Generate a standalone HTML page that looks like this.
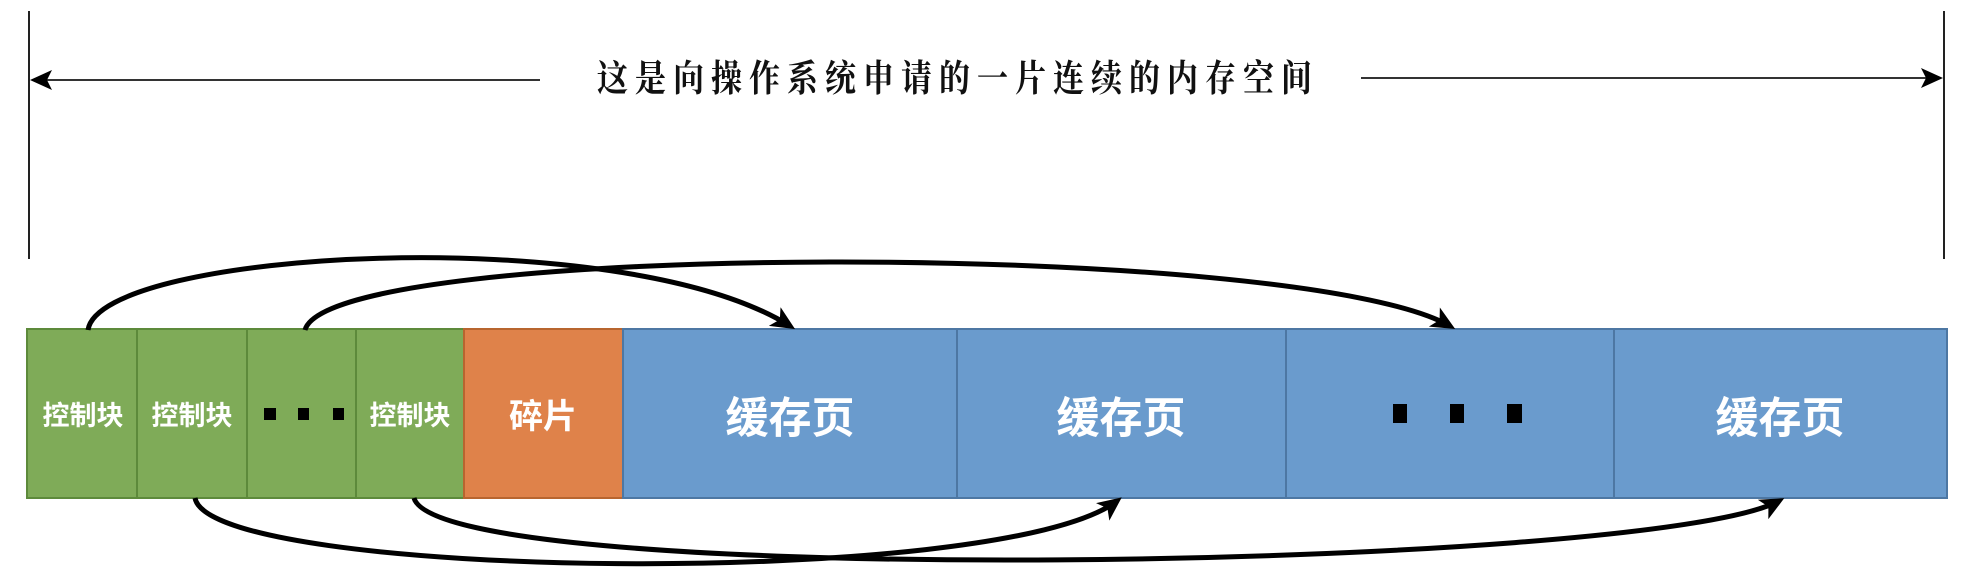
<!DOCTYPE html>
<html><head><meta charset="utf-8"><style>
html,body{margin:0;padding:0;background:#fff;}
svg{display:block}
.t{font-family:"Liberation Sans","Noto Sans CJK SC",sans-serif;fill:#fff;text-anchor:middle;}
</style></head><body>
<svg width="1974" height="584" viewBox="0 0 1974 584" xmlns="http://www.w3.org/2000/svg">
<defs>
<marker id="ah" markerWidth="24" markerHeight="22" refX="18" refY="11" orient="auto" markerUnits="userSpaceOnUse" viewBox="0 0 24 22">
<path d="M0,0 L24,11 L0,22 L6,11 Z" fill="#000"/>
</marker>
</defs>
<line x1="29" y1="11" x2="29" y2="259" stroke="#222" stroke-width="2"/>
<line x1="1944" y1="11" x2="1944" y2="259" stroke="#222" stroke-width="2"/>
<line x1="40" y1="80" x2="540" y2="80" stroke="#333" stroke-width="2"/>
<path d="M30,80 L52,70 L47,80 L52,90 Z" fill="#000"/>
<line x1="1361" y1="78" x2="1932" y2="78" stroke="#333" stroke-width="2"/>
<path d="M1943,78 L1921,68 L1926,78 L1921,88 Z" fill="#000"/>
<g transform="translate(958,91) scale(1,1.2)">
<text x="0" y="0" font-family="'Liberation Serif','Noto Serif CJK SC',serif" font-weight="bold" font-size="31" letter-spacing="7" text-anchor="middle" fill="#111">这是向操作系统申请的一片连续的内存空间</text>
</g>
<g stroke-width="2">
<rect x="27" y="329" width="110" height="169" fill="#7fab58" stroke="#5d8a3b"/>
<rect x="137" y="329" width="110" height="169" fill="#7fab58" stroke="#5d8a3b"/>
<rect x="247" y="329" width="109" height="169" fill="#7fab58" stroke="#5d8a3b"/>
<rect x="356" y="329" width="108" height="169" fill="#7fab58" stroke="#5d8a3b"/>
<rect x="464" y="329" width="159" height="169" fill="#df824a" stroke="#b8652f"/>
<rect x="623" y="329" width="334" height="169" fill="#6a9bcd" stroke="#4d77a3"/>
<rect x="957" y="329" width="329" height="169" fill="#6a9bcd" stroke="#4d77a3"/>
<rect x="1286" y="329" width="328" height="169" fill="#6a9bcd" stroke="#4d77a3"/>
<rect x="1614" y="329" width="333" height="169" fill="#6a9bcd" stroke="#4d77a3"/>
</g>
<g font-weight="bold">
<text class="t" x="83" y="425" font-size="27">控制块</text>
<text class="t" x="192" y="425" font-size="27">控制块</text>
<text class="t" x="410" y="425" font-size="27">控制块</text>
<text class="t" x="543" y="428" font-size="34">碎片</text>
<text class="t" x="790" y="433" font-size="43">缓存页</text>
<text class="t" x="1121" y="433" font-size="43">缓存页</text>
<text class="t" x="1780" y="433" font-size="43">缓存页</text>
</g>
<g fill="#000">
<rect x="264" y="408" width="12" height="12"/><rect x="298" y="408" width="11" height="12"/><rect x="333" y="408" width="11" height="12"/>
<rect x="1393" y="404" width="14" height="19"/><rect x="1450" y="404" width="14" height="19"/><rect x="1507" y="404" width="15" height="19"/>
</g>
<g fill="none" stroke="#000" stroke-width="5" marker-end="url(#ah)">
<path d="M88,330 C100,250 620,220 790,326"/>
<path d="M305,330 C330,240 1300,240 1450,326"/>
<path d="M195,498 C210,580 1000,590 1117,501"/>
<path d="M414,498 C440,590 1650,570 1779,501"/>
</g>
</svg>
</body></html>
